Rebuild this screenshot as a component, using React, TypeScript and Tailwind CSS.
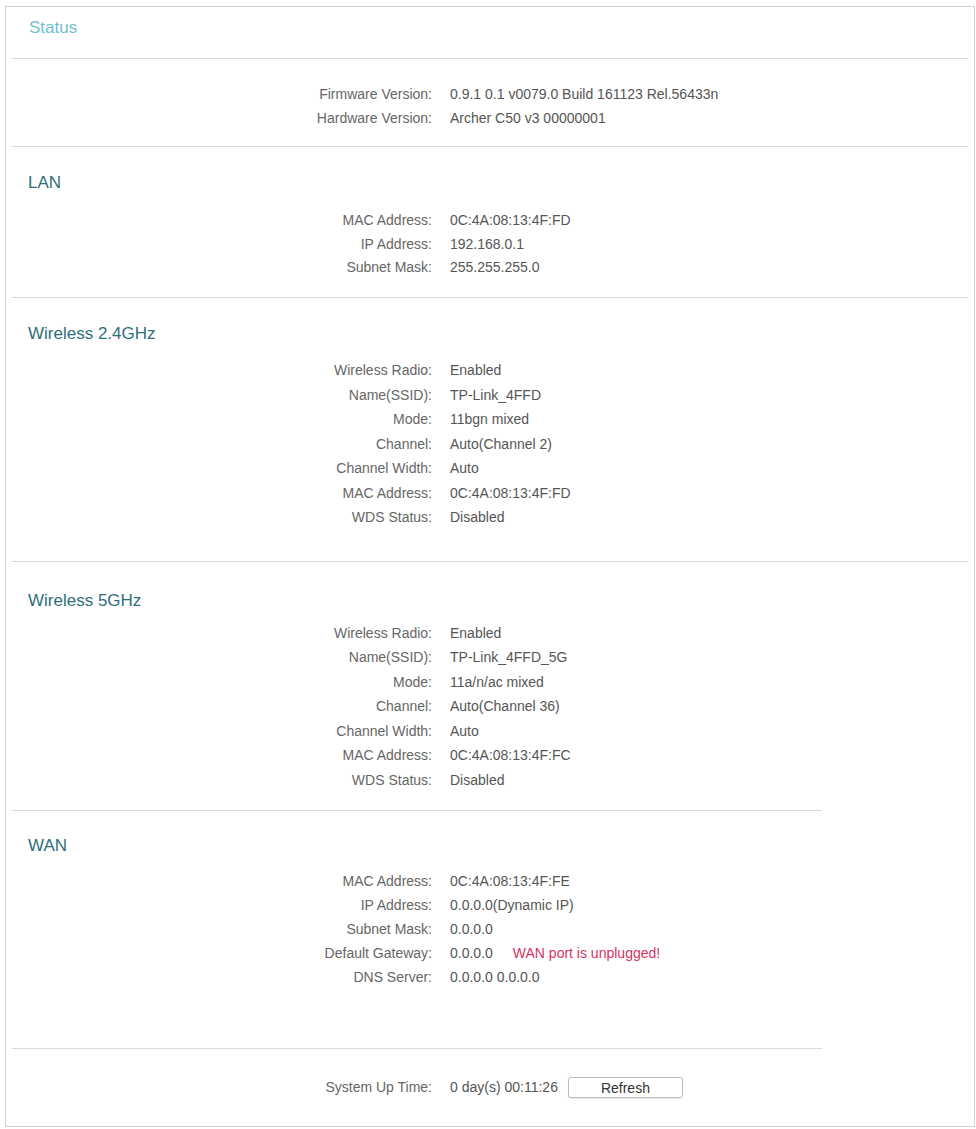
import React from "react";

type Row = { label: string; value: React.ReactNode };

const Rule = ({ short }: { short?: boolean }) => (
  <div className={short ? "mx-[6px] h-px w-[810px] bg-[#d9d9d9]" : "mx-[6px] h-px bg-[#d9d9d9]"} />
);

const Rows = ({ rows, rowH }: { rows: Row[]; rowH: string }) => (
  <div className="flex flex-col">
    {rows.map((r) => (
      <div key={r.label} className={`grid grid-cols-[426px_1fr] gap-x-[18px] items-center ${rowH}`}>
        <span className="text-right text-[#666]">{r.label}</span>
        <span className="text-[#555]">{r.value}</span>
      </div>
    ))}
  </div>
);

const Section = ({
  title,
  rows,
  rowH = "h-[24px]",
  className,
  gap,
}: {
  title: string;
  rows: Row[];
  rowH?: string;
  className: string;
  gap: string;
}) => (
  <div className={className}>
    <h2 className={`pl-[22px] text-[17px] leading-[20px] text-[#2f6e79] ${gap}`}>{title}</h2>
    <Rows rows={rows} rowH={rowH} />
  </div>
);

export default function App() {
  return (
    <div className="bg-white pt-[6px] pl-[5px] pb-[2px]" style={{ fontFamily: '"Liberation Sans", Arial, sans-serif' }}>
      <div className="w-[970px] border border-[#cfcfcf] text-[14px]">
        <div className="pt-[11px] pb-[20px] pl-[23px]">
          <h1 className="text-[17px] leading-[20px] text-[#6fc3cf]">Status</h1>
        </div>
        <Rule />
        <div className="pt-[23px] pb-[16px]">
          <Rows
            rowH="h-[24px]"
            rows={[
              { label: "Firmware Version:", value: "0.9.1 0.1 v0079.0 Build 161123 Rel.56433n" },
              { label: "Hardware Version:", value: "Archer C50 v3 00000001" },
            ]}
          />
        </div>
        <Rule />
        <Section
          title="LAN"
          className="pt-[26px] pb-[17px]"
          gap="mb-[16px]"
          rowH="h-[23.5px]"
          rows={[
            { label: "MAC Address:", value: "0C:4A:08:13:4F:FD" },
            { label: "IP Address:", value: "192.168.0.1" },
            { label: "Subnet Mask:", value: "255.255.255.0" },
          ]}
        />
        <Rule />
        <Section
          title="Wireless 2.4GHz"
          className="pt-[26px] pb-[31px]"
          gap="mb-[15px]"
          rowH="h-[24.5px]"
          rows={[
            { label: "Wireless Radio:", value: "Enabled" },
            { label: "Name(SSID):", value: "TP-Link_4FFD" },
            { label: "Mode:", value: "11bgn mixed" },
            { label: "Channel:", value: "Auto(Channel 2)" },
            { label: "Channel Width:", value: "Auto" },
            { label: "MAC Address:", value: "0C:4A:08:13:4F:FD" },
            { label: "WDS Status:", value: "Disabled" },
          ]}
        />
        <Rule />
        <Section
          title="Wireless 5GHz"
          className="pt-[29px] pb-[17px]"
          gap="mb-[10px]"
          rowH="h-[24.5px]"
          rows={[
            { label: "Wireless Radio:", value: "Enabled" },
            { label: "Name(SSID):", value: "TP-Link_4FFD_5G" },
            { label: "Mode:", value: "11a/n/ac mixed" },
            { label: "Channel:", value: "Auto(Channel 36)" },
            { label: "Channel Width:", value: "Auto" },
            { label: "MAC Address:", value: "0C:4A:08:13:4F:FC" },
            { label: "WDS Status:", value: "Disabled" },
          ]}
        />
        <Rule short />
        <Section
          title="WAN"
          className="pt-[25px] pb-[58px]"
          gap="mb-[14px]"
          rows={[
            { label: "MAC Address:", value: "0C:4A:08:13:4F:FE" },
            { label: "IP Address:", value: "0.0.0.0(Dynamic IP)" },
            { label: "Subnet Mask:", value: "0.0.0.0" },
            {
              label: "Default Gateway:",
              value: (
                <>
                  0.0.0.0<span className="ml-[20px] text-[#d6335f]">WAN port is unplugged!</span>
                </>
              ),
            },
            { label: "DNS Server:", value: "0.0.0.0 0.0.0.0" },
          ]}
        />
        <Rule short />
        <div className="pt-[27px] pb-[26px]">
          <div className="grid grid-cols-[426px_1fr] gap-x-[18px] items-center h-[24px]">
            <span className="text-right text-[#666]">System Up Time:</span>
            <div className="flex items-center">
              <span className="text-[#555]">0 day(s) 00:11:26</span>
              <button className="ml-[10px] h-[21px] w-[115px] rounded-[3px] border border-[#bdbdbd] bg-white text-[14px] leading-none text-[#333] shadow-[0_1px_1px_rgba(0,0,0,0.08)]">
                Refresh
              </button>
            </div>
          </div>
        </div>
      </div>
    </div>
  );
}
